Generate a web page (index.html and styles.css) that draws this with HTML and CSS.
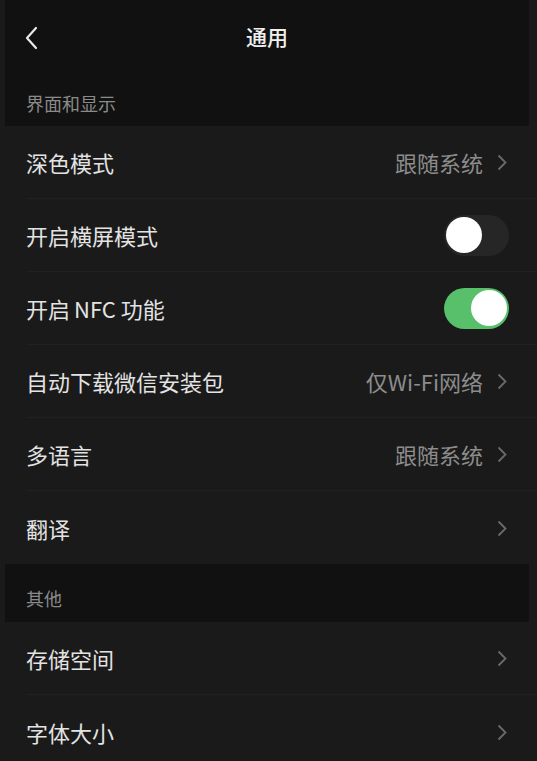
FILE: index.html
```html
<!DOCTYPE html>
<html lang="zh-CN">
<head>
    <meta charset="UTF-8">
    <meta name="viewport" content="width=device-width, initial-scale=1.0">
    <title>通用</title>
    <link rel="stylesheet" href="styles.css">
</head>
<body>
    <div class="page">
        <div class="top">
            <div class="nav">
                <span class="back">
                    <svg width="14" height="24" viewBox="0 0 14 24"><path d="M12 2 L3 12 L12 22" fill="none" stroke="#e8e8e8" stroke-width="2.2" stroke-linecap="round" stroke-linejoin="round"/></svg>
                </span>
                <div class="title">通用</div>
            </div>
            <div class="section first">界面和显示</div>
        </div>

        <div class="list">
            <div class="row">
                <span class="label">深色模式</span>
                <span class="value">跟随系统</span>
                <span class="arrow"><svg width="10" height="17" viewBox="0 0 10 17"><path d="M1.5 1.5 L8.5 8.5 L1.5 15.5" fill="none" stroke="#6a6a6a" stroke-width="1.8"/></svg></span>
            </div>
            <div class="row">
                <span class="label">开启横屏模式</span>
                <span class="switch"><span class="knob"></span></span>
            </div>
            <div class="row">
                <span class="label">开启<span class="latin">NFC</span> 功能</span>
                <span class="switch on"><span class="knob"></span></span>
            </div>
            <div class="row">
                <span class="label">自动下载微信安装包</span>
                <span class="value">仅Wi-Fi网络</span>
                <span class="arrow"><svg width="10" height="17" viewBox="0 0 10 17"><path d="M1.5 1.5 L8.5 8.5 L1.5 15.5" fill="none" stroke="#6a6a6a" stroke-width="1.8"/></svg></span>
            </div>
            <div class="row">
                <span class="label">多语言</span>
                <span class="value">跟随系统</span>
                <span class="arrow"><svg width="10" height="17" viewBox="0 0 10 17"><path d="M1.5 1.5 L8.5 8.5 L1.5 15.5" fill="none" stroke="#6a6a6a" stroke-width="1.8"/></svg></span>
            </div>
            <div class="row last">
                <span class="label">翻译</span>
                <span class="arrow"><svg width="10" height="17" viewBox="0 0 10 17"><path d="M1.5 1.5 L8.5 8.5 L1.5 15.5" fill="none" stroke="#6a6a6a" stroke-width="1.8"/></svg></span>
            </div>
        </div>

        <div class="section">其他</div>

        <div class="list">
            <div class="row">
                <span class="label">存储空间</span>
                <span class="arrow"><svg width="10" height="17" viewBox="0 0 10 17"><path d="M1.5 1.5 L8.5 8.5 L1.5 15.5" fill="none" stroke="#6a6a6a" stroke-width="1.8"/></svg></span>
            </div>
            <div class="row last">
                <span class="label">字体大小</span>
                <span class="arrow"><svg width="10" height="17" viewBox="0 0 10 17"><path d="M1.5 1.5 L8.5 8.5 L1.5 15.5" fill="none" stroke="#6a6a6a" stroke-width="1.8"/></svg></span>
            </div>
        </div>
    </div>
</body>
</html>
```

FILE: styles.css
```css
body {
    margin: 0;
    background-color: #1a1a1a;
    font-family: "Noto Sans CJK SC", "Noto Sans", sans-serif;
    color: #e5e5e5;
    overflow: hidden;
}
.page {
    width: 537px;
}
.top {
    background-color: #111;
    margin: 0 8px 0 5px;
}
.nav {
    height: 72px;
    display: flex;
    align-items: center;
    justify-content: center;
    position: relative;
}
.back {
    position: absolute;
    left: 19px;
    top: 26px;
    display: flex;
}
.title {
    font-size: 21px;
    font-weight: 500;
    color: #f0f0f0;
}
.section {
    background-color: #111;
    margin: 0 8px 0 5px;
    height: 58px;
    padding: 10px 0 0 21px;
    box-sizing: border-box;
    display: flex;
    align-items: center;
    font-size: 18px;
    color: #8a8a8a;
}
.section.first {
    margin: 0;
    height: 54px;
    padding-top: 8px;
}
.list {
    background-color: #1a1a1a;
}
.row {
    height: 73px;
    margin-left: 26px;
    padding-right: 30px;
    display: flex;
    align-items: center;
    border-bottom: 1px solid #212121;
    box-sizing: border-box;
}
.row.last {
    border-bottom: none;
}
.label {
    flex: 1;
    font-size: 22px;
    color: #e3e3e3;
}
.latin {
    margin-left: 4px;
}
.value {
    font-size: 22px;
    color: #8c8c8c;
    margin-right: 14px;
}
.arrow {
    display: flex;
    margin-top: 1px;
}
.switch {
    width: 65px;
    height: 41px;
    border-radius: 21px;
    background-color: #262626;
    display: flex;
    align-items: center;
    padding: 0 2px;
    box-sizing: border-box;
    margin-right: -2px;
}
.switch .knob {
    width: 36px;
    height: 36px;
    border-radius: 50%;
    background-color: #fff;
}
.switch.on {
    background-color: #58bf6b;
    justify-content: flex-end;
}
```
